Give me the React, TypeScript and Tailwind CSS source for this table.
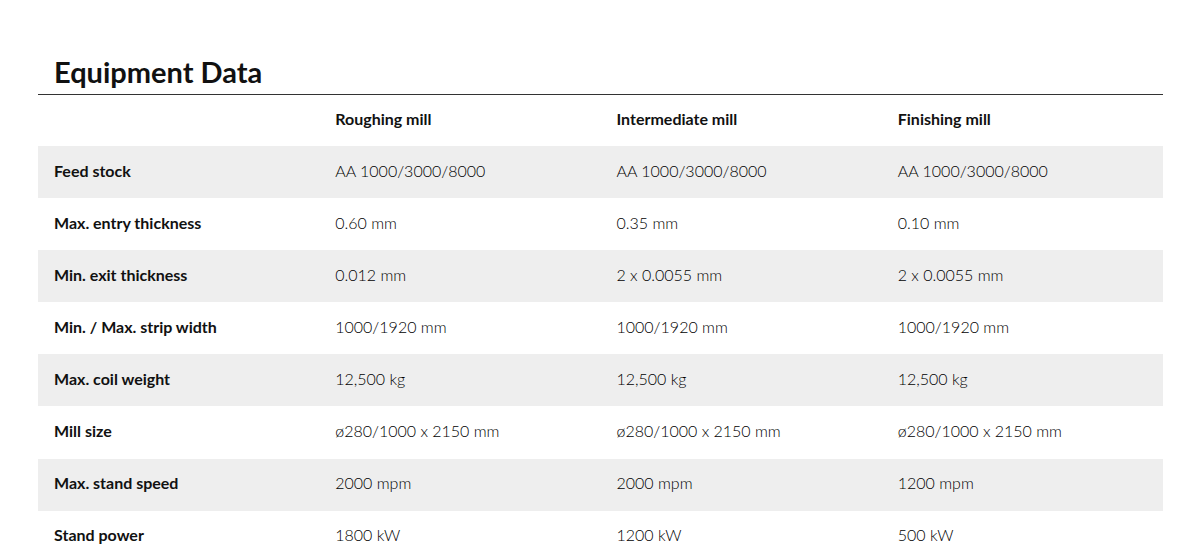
import React from "react";

const rows: [string, string, string, string][] = [
  ["Feed stock", "AA 1000/3000/8000", "AA 1000/3000/8000", "AA 1000/3000/8000"],
  ["Max. entry thickness", "0.60 mm", "0.35 mm", "0.10 mm"],
  ["Min. exit thickness", "0.012 mm", "2 x 0.0055 mm", "2 x 0.0055 mm"],
  ["Min. / Max. strip width", "1000/1920 mm", "1000/1920 mm", "1000/1920 mm"],
  ["Max. coil weight", "12,500 kg", "12,500 kg", "12,500 kg"],
  ["Mill size", "ø280/1000 x 2150 mm", "ø280/1000 x 2150 mm", "ø280/1000 x 2150 mm"],
  ["Max. stand speed", "2000 mpm", "2000 mpm", "1200 mpm"],
  ["Stand power", "1800 kW", "1200 kW", "500 kW"],
];

export default function App() {
  return (
    <div className="w-[1200px] h-[550px] overflow-hidden bg-white text-[#111]" style={{ fontFamily: "Lato, 'Noto Sans', sans-serif" }}>
      <div className="ml-[38px] w-[1125px] pt-[54px]">
        <h1 className="px-4 text-[29px] font-bold leading-[35px] pb-[5px] border-b border-[#333] text-[#111]">Equipment Data</h1>
        <div className="grid grid-cols-4 h-[51px] items-center text-[16px] font-bold pb-[3px]">
          <div className="px-4"></div>
          <div className="px-4">Roughing mill</div>
          <div className="px-4">Intermediate mill</div>
          <div className="px-4">Finishing mill</div>
        </div>
        {rows.map((r, i) => (
          <div key={i} className={`grid grid-cols-4 h-[52.1px] items-center text-[16px] pb-[3px] ${i % 2 === 0 ? "bg-[#eeeeee]" : "bg-white"}`}>
            <div className="px-4 font-bold">{r[0]}</div>
            <div className="px-4 font-light text-black">{r[1]}</div>
            <div className="px-4 font-light text-black">{r[2]}</div>
            <div className="px-4 font-light text-black">{r[3]}</div>
          </div>
        ))}
      </div>
    </div>
  );
}
